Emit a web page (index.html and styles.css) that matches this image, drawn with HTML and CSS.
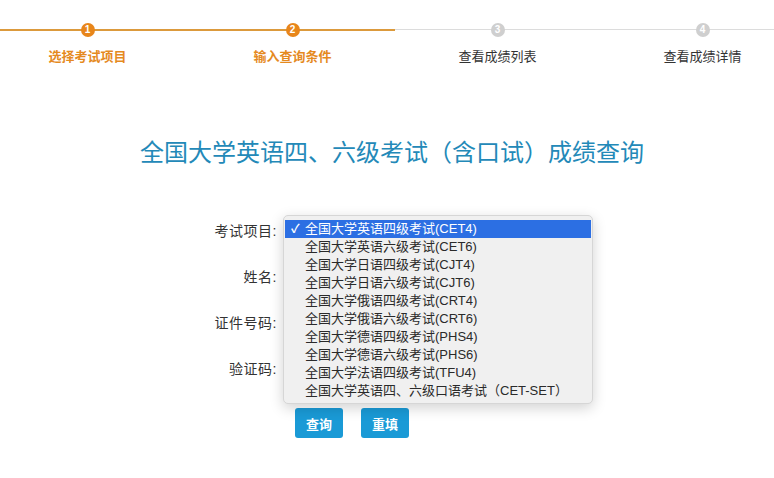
FILE: index.html
```
<!DOCTYPE html>
<html lang="zh-CN">
<head>
    <meta charset="UTF-8">
    <meta name="viewport" content="width=device-width, initial-scale=1.0">
    <title>成绩查询</title>
    <link rel="stylesheet" href="styles.css">
</head>
<body>
    <div class="steps">
        <div class="step done">
            <div class="track"><span class="dot">1</span></div>
            <div class="step-name">选择考试项目</div>
        </div>
        <div class="step done">
            <div class="track"><span class="dot">2</span></div>
            <div class="step-name">输入查询条件</div>
        </div>
        <div class="step">
            <div class="track"><span class="dot">3</span></div>
            <div class="step-name">查看成绩列表</div>
        </div>
        <div class="step">
            <div class="track"><span class="dot">4</span></div>
            <div class="step-name">查看成绩详情</div>
        </div>
    </div>

    <h1 class="title">全国大学英语四、六级考试（含口试）成绩查询</h1>

    <form class="query-form">
        <div class="row">
            <label>考试项目:</label>
            <div class="field"><span class="fake-select"></span></div>
        </div>
        <div class="row">
            <label>姓名:</label>
            <div class="field"><input type="text"></div>
        </div>
        <div class="row">
            <label>证件号码:</label>
            <div class="field"><input type="text"></div>
        </div>
        <div class="row">
            <label>验证码:</label>
            <div class="field"><input type="text"></div>
        </div>
        <div class="actions">
            <button type="button" class="btn">查询</button>
            <button type="button" class="btn">重填</button>
        </div>

        <!-- opened select menu -->
        <ul class="menu">
            <li class="selected"><span class="check">✓</span>全国大学英语四级考试(CET4)</li>
            <li>全国大学英语六级考试(CET6)</li>
            <li>全国大学日语四级考试(CJT4)</li>
            <li>全国大学日语六级考试(CJT6)</li>
            <li>全国大学俄语四级考试(CRT4)</li>
            <li>全国大学俄语六级考试(CRT6)</li>
            <li>全国大学德语四级考试(PHS4)</li>
            <li>全国大学德语六级考试(PHS6)</li>
            <li>全国大学法语四级考试(TFU4)</li>
            <li>全国大学英语四、六级口语考试（CET-SET）</li>
        </ul>
    </form>
</body>
</html>
```

FILE: styles.css
```
body {
    margin: 0;
    background: #fff;
    font-family: "Liberation Sans", "Noto Sans CJK SC", sans-serif;
    color: #333;
    overflow: hidden;
}
.steps {
    display: flex;
    margin-left: -15px;
    padding-top: 23px;
}
.step {
    width: 205px;
    flex: none;
    text-align: center;
}
.track {
    height: 14px;
    display: flex;
    justify-content: center;
    background: linear-gradient(to bottom, transparent 6px, #dcdcdc 6px, #dcdcdc 7px, transparent 7px);
}
.step.done .track {
    background: linear-gradient(to bottom, transparent 6px, #dc9a3c 6px, #dc9a3c 8px, transparent 8px);
}
.dot {
    width: 14px;
    height: 14px;
    border-radius: 50%;
    background: #cfcfcf;
    color: #fff;
    font-size: 10px;
    font-weight: bold;
    line-height: 14px;
}
.step.done .dot {
    background: #e8861a;
}
.step-name {
    margin-top: 11px;
    font-size: 13px;
    line-height: 18px;
    color: #333;
}
.step.done .step-name {
    color: #e58a1f;
    font-weight: bold;
}
.title {
    margin: 71px 0 0 10px;
    text-align: center;
    font-size: 24px;
    line-height: 32px;
    font-weight: normal;
    color: #2389b8;
}
.query-form {
    position: relative;
    margin: 38px 0 0 188px;
    width: 420px;
}
.row {
    display: flex;
    align-items: center;
    height: 46px;
}
.row label {
    width: 90px;
    margin-left: -1px;
    text-align: right;
    font-size: 14px;
    letter-spacing: 0.5px;
    color: #333;
}
.field {
    margin-left: 8px;
}
.field input,
.fake-select {
    display: block;
    width: 200px;
    height: 22px;
    border: 1px solid #ccc;
    box-sizing: border-box;
}
.actions {
    display: flex;
    gap: 18px;
    margin: 17px 0 0 107px;
}
.btn {
    width: 48px;
    height: 30px;
    border: none;
    border-radius: 3px;
    background: #1a9ad6;
    color: #fff;
    font-family: inherit;
    font-size: 13px;
    font-weight: bold;
    padding: 0;
}
.menu {
    position: absolute;
    left: 95px;
    top: 8px;
    width: 310px;
    height: 189px;
    box-sizing: border-box;
    margin: 0;
    padding: 4px 1px 5px;
    list-style: none;
    background: #f0f0f0;
    border: 1px solid #d6d6d6;
    border-radius: 5px;
    box-shadow: 0 4px 14px rgba(0, 0, 0, 0.18);
    font-family: "Liberation Sans", "Noto Sans CJK SC", sans-serif;
    font-size: 13px;
}
.menu li {
    height: 18px;
    line-height: 18px;
    padding-left: 20px;
    color: #2a2a2a;
    white-space: nowrap;
}
.menu li.selected {
    position: relative;
    background: #2c6fe3;
    color: #fff;
}
.check {
    position: absolute;
    left: 6px;
    font-size: 12px;
    font-weight: bold;
}
```
